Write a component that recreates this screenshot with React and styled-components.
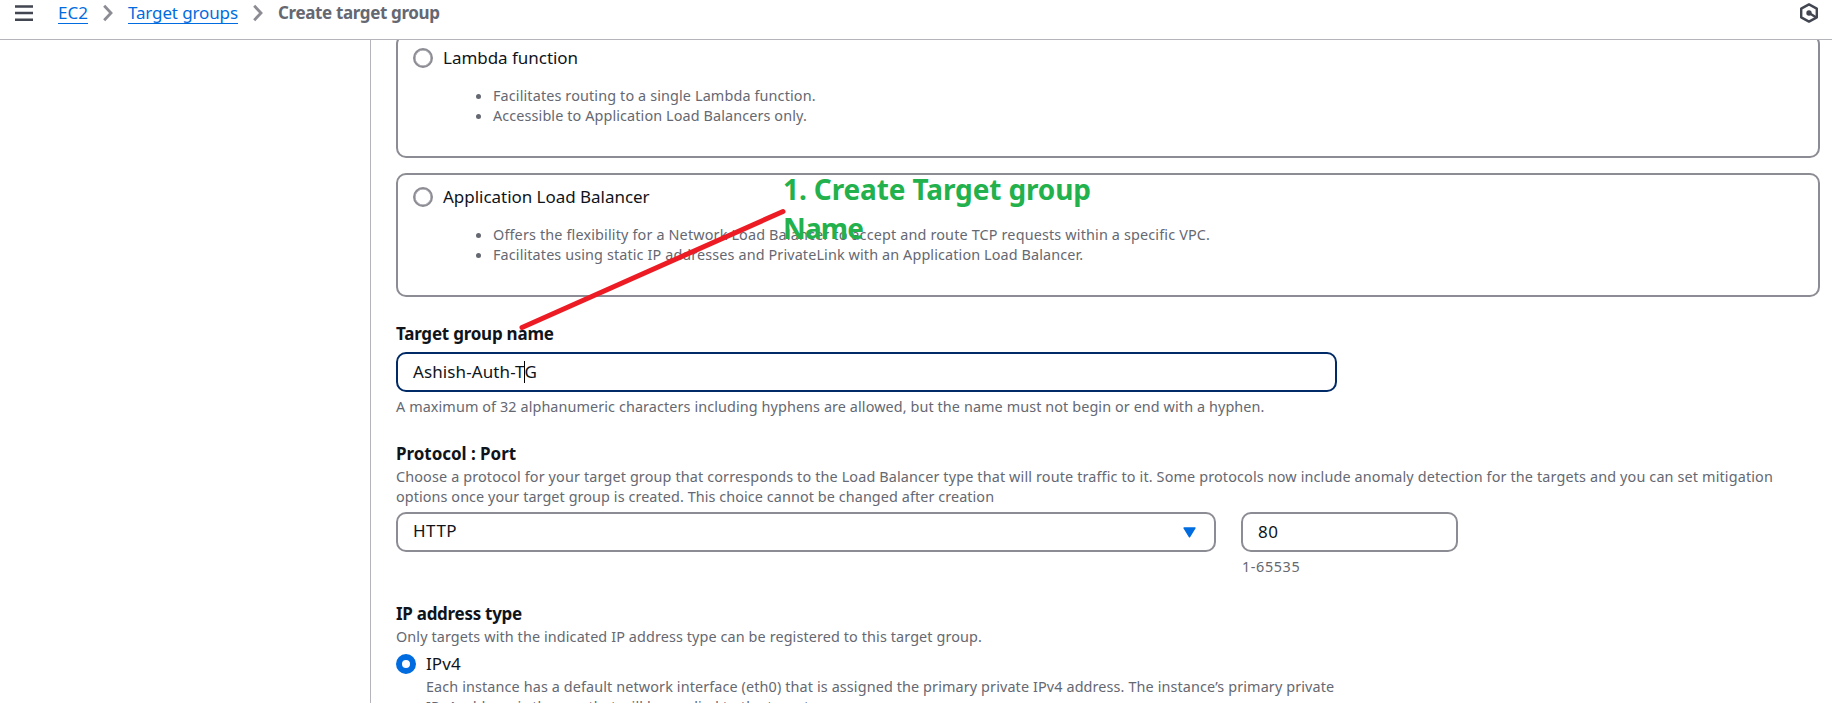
import React from 'react';
import styled, { createGlobalStyle } from 'styled-components';

const c = {
  text: '#0f141a',
  muted: '#656871',
  border: '#8c8c94',
  link: '#006ce0',
  navy: '#002b66',
  icon: '#424650',
};

const Global = createGlobalStyle`
  * { box-sizing: border-box; }
  body {
    margin: 0;
    overflow: hidden;
    background: #fff;
    color: ${c.text};
    font-family: 'Noto Sans', 'Open Sans', sans-serif;
    font-size: 17px;
    line-height: 25px;
  }
`;

const Page = styled.div`
  position: relative;
  display: flex;
  flex-direction: column;
  height: 703px;
  overflow: hidden;
`;

const TopBar = styled.header`
  display: flex;
  flex: none;
  align-items: flex-start;
  height: 40px;
  padding: 0 14px 0 15px;
  border-bottom: 1px solid #b4b4bb;
`;

const MenuIcon = styled.svg`
  width: 18px;
  height: 26px;
  margin-right: 25px;
`;

const Crumbs = styled.nav`
  display: flex;
  flex: 1;
`;

const CrumbLink = styled.a`
  height: 24px;
  color: ${c.link};
  letter-spacing: ${(p) => p.$spacing};
  border-bottom: 1px solid ${c.link};
  white-space: nowrap;
`;

const CrumbCurrent = styled.span`
  color: ${c.muted};
  font-weight: 700;
  letter-spacing: -0.36px;
`;

const Chevron = styled.svg`
  width: 10px;
  height: 26px;
  margin: 0 15px;
`;

const HexIcon = styled.svg`
  width: 18px;
  height: 20px;
  margin-top: 3px;
`;

const Body = styled.div`
  display: flex;
  flex: 1;
  min-height: 0;
`;

const Sidebar = styled.aside`
  flex: none;
  width: 371px;
  border-right: 1px solid #b4b4bb;
`;

const Main = styled.main`
  flex: 1;
  height: 663px;
  padding: 0 12px 0 25px;
  overflow: hidden;
`;

const Cards = styled.div`
  display: flex;
  flex-direction: column;
  gap: 15px;
  margin-top: -6px;
`;

const Card = styled.section`
  height: 124px;
  padding: 9px 15px;
  border: 2px solid ${c.border};
  border-radius: 10px;
`;

const Option = styled.label`
  display: flex;
  gap: 10px;
`;

const Radio = styled.span`
  flex: none;
  width: 20px;
  height: 20px;
  margin-top: 3px;
  border: ${(p) => (p.$checked ? `6px solid ${c.link}` : `2px solid ${c.border}`)};
  border-radius: 50%;
  box-shadow: ${(p) => (p.$checked ? 'none' : `inset 0 0 0 0.5px ${c.border}`)};
`;

const OptionLabel = styled.span`
  letter-spacing: ${(p) => p.$spacing || '-0.03px'};
`;

const Bullets = styled.ul`
  margin: 16px 0 0;
  padding: 0 0 0 60px;
  list-style: none;
`;

const Bullet = styled.li`
  display: flex;
  align-items: center;
  color: ${c.muted};
  font-size: 14.4px;
  line-height: 20px;
  letter-spacing: ${(p) => p.$spacing};
  white-space: nowrap;

  &::before {
    content: '';
    width: 5px;
    height: 5px;
    margin: 1px 12px 0 3px;
    border-radius: 50%;
    background: ${c.muted};
  }
`;

const Field = styled.section`
  margin-top: ${(p) => p.$top};
`;

const FieldTitle = styled.h3`
  margin: 0;
  font-size: 17px;
  font-weight: 700;
  line-height: 25px;
  letter-spacing: ${(p) => p.$spacing};
`;

const Help = styled.p`
  margin: ${(p) => p.$margin || '0'};
  color: ${c.muted};
  font-size: 14.4px;
  line-height: 20px;
  letter-spacing: ${(p) => p.$spacing};
  white-space: nowrap;
`;

const HelpLine = styled.span`
  display: block;
  letter-spacing: ${(p) => p.$spacing};
`;

const Box = styled.div`
  display: flex;
  align-items: center;
  width: ${(p) => p.$width};
  height: 40px;
  padding: 0 15px 2px;
  border: 2px solid ${(p) => (p.$focused ? c.navy : c.border)};
  border-radius: 10px;
  letter-spacing: ${(p) => p.$spacing};
`;

const NameBox = styled(Box)`
  margin-top: 6px;
`;

const SelectBox = styled(Box)`
  justify-content: space-between;
  padding: 0 18px 4px 15px;
`;

const Caret = styled.span`
  width: 1px;
  height: 22px;
  margin: 2px -0.5px 0;
  background: #000;
`;

const Triangle = styled.svg`
  width: 13px;
  height: 11px;
  margin-top: 4px;
`;

const PortRow = styled.div`
  display: flex;
  align-items: flex-start;
  gap: 25px;
  margin-top: 5px;
`;

const OptionBody = styled.div`
  padding-top: 1px;
  padding-left: 30px;
`;

const Note = styled.div`
  position: absolute;
  top: 170px;
  left: 783px;
  color: #22b14c;
  font-size: 28px;
  font-weight: 700;
  line-height: 39px;
`;

const NoteLine = styled.div`
  letter-spacing: ${(p) => p.$spacing};
  white-space: nowrap;
`;

const Pointer = styled.svg`
  position: absolute;
  top: 200px;
  left: 510px;
  width: 290px;
  height: 140px;
`;

const Separator = () => (
  <Chevron viewBox="0 0 10 26">
    <path d="M1.2 5.8 L8 13 L1.2 20.2" fill="none" stroke={c.border} strokeWidth="2.8" />
  </Chevron>
);

export default function App() {
  return (
    <Page>
      <Global />
      <TopBar>
        <MenuIcon viewBox="0 0 18 26">
          <path d="M0 6.5H18M0 13H18M0 19.8H18" stroke={c.icon} strokeWidth="2.4" />
        </MenuIcon>
        <Crumbs>
          <CrumbLink>EC2</CrumbLink>
          <Separator />
          <CrumbLink $spacing="-0.12px">Target groups</CrumbLink>
          <Separator />
          <CrumbCurrent>Create target group</CrumbCurrent>
        </Crumbs>
        <HexIcon viewBox="0 0 18 20">
          <path d="M9 1.4 L16.8 5.6 V14.4 L9 18.6 L1.2 14.4 V5.6 Z" fill="none" stroke={c.icon} strokeWidth="2.4" strokeLinejoin="round" />
          <circle cx="9" cy="10" r="2.7" fill={c.icon} />
          <path d="M9 10 L16 14.2" stroke={c.icon} strokeWidth="2.4" />
        </HexIcon>
      </TopBar>
      <Body>
        <Sidebar />
        <Main>
          <Cards>
            <Card>
              <Option>
                <Radio />
                <OptionLabel>Lambda function</OptionLabel>
              </Option>
              <Bullets>
                <Bullet $spacing="0.13px">Facilitates routing to a single Lambda function.</Bullet>
                <Bullet $spacing="0.11px">Accessible to Application Load Balancers only.</Bullet>
              </Bullets>
            </Card>
            <Card>
              <Option>
                <Radio />
                <OptionLabel>Application Load Balancer</OptionLabel>
              </Option>
              <Bullets>
                <Bullet $spacing="0.155px">
                  Offers the flexibility for a Network Load Balancer to accept and route TCP requests within a specific VPC.
                </Bullet>
                <Bullet $spacing="0.12px">
                  Facilitates using static IP addresses and PrivateLink with an Application Load Balancer.
                </Bullet>
              </Bullets>
            </Card>
          </Cards>

          <Field $top="24px">
            <FieldTitle $spacing="-0.23px">Target group name</FieldTitle>
            <NameBox $width="941px" $focused $spacing="0.1px">
              Ashish-Auth-T<Caret />G
            </NameBox>
            <Help $margin="5px 0 0" $spacing="0.095px">
              A maximum of 32 alphanumeric characters including hyphens are allowed, but the name must not begin or end with a hyphen.
            </Help>
          </Field>

          <Field $top="24px">
            <FieldTitle $spacing="-0.04px">Protocol : Port</FieldTitle>
            <Help $margin="1px 0 0">
              <HelpLine $spacing="0.141px">
                Choose a protocol for your target group that corresponds to the Load Balancer type that will route traffic to it. Some protocols now include anomaly detection for the targets and you can set mitigation
              </HelpLine>
              <HelpLine $spacing="0.08px">
                options once your target group is created. This choice cannot be changed after creation
              </HelpLine>
            </Help>
            <PortRow>
              <SelectBox $width="820px" $spacing="0.5px">
                HTTP
                <Triangle viewBox="0 0 13 11">
                  <path d="M1 1H12L6.5 9.8Z" fill={c.link} stroke={c.link} strokeWidth="1.4" strokeLinejoin="round" />
                </Triangle>
              </SelectBox>
              <div>
                <Box $width="217px" $spacing="0.5px">80</Box>
                <Help $margin="5px 0 0 1px" $spacing="0.6px">1-65535</Help>
              </div>
            </PortRow>
          </Field>

          <Field $top="24px">
            <FieldTitle $spacing="-0.28px">IP address type</FieldTitle>
            <Help $margin="1px 0 0" $spacing="0.11px">
              Only targets with the indicated IP address type can be registered to this target group.
            </Help>
            <Field $top="4px">
              <Option>
                <Radio $checked />
                <OptionLabel $spacing="0.1px">IPv4</OptionLabel>
              </Option>
              <OptionBody>
                <Help $spacing="0.117px">
                  Each instance has a default network interface (eth0) that is assigned the primary private IPv4 address. The instance’s primary private
                  <br />
                  IPv4 address is the one that will be applied to the target.
                </Help>
              </OptionBody>
            </Field>
          </Field>
        </Main>
      </Body>
      <Note>
        <NoteLine $spacing="-0.12px">1. Create Target group</NoteLine>
        <NoteLine $spacing="-0.85px">Name</NoteLine>
      </Note>
      <Pointer viewBox="0 0 290 140">
        <path d="M12 127.5 L273 11.5" stroke="#ed1c24" strokeWidth="5" strokeLinecap="round" />
      </Pointer>
    </Page>
  );
}
